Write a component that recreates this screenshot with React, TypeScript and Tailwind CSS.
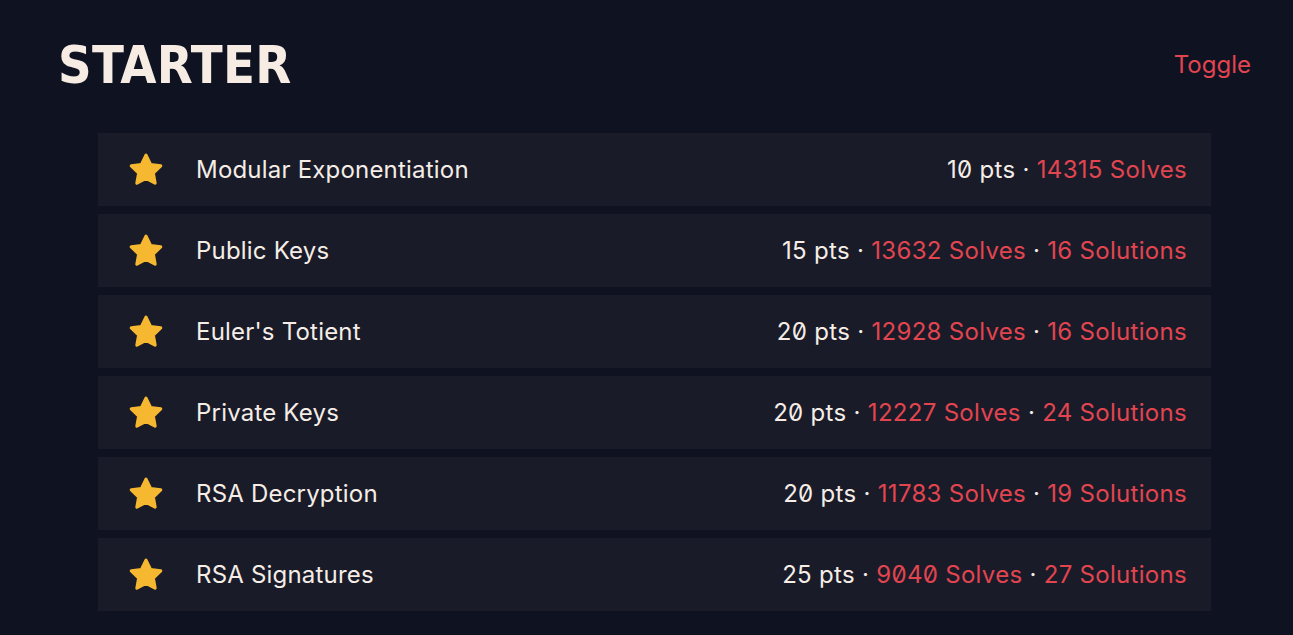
import React from "react";

const CHALLENGES = [
  { name: "Modular Exponentiation", pts: 10, solves: 14315, solutions: null },
  { name: "Public Keys", pts: 15, solves: 13632, solutions: 16 },
  { name: "Euler's Totient", pts: 20, solves: 12928, solutions: 16 },
  { name: "Private Keys", pts: 20, solves: 12227, solutions: 24 },
  { name: "RSA Decryption", pts: 20, solves: 11783, solutions: 19 },
  { name: "RSA Signatures", pts: 25, solves: 9040, solutions: 27 },
];

function Star() {
  return (
    <svg viewBox="0 0 24 24" className="w-[38px] h-[38px]" aria-hidden>
      <path
        d="M12 2.6l2.85 5.9 6.45.9-4.7 4.5 1.15 6.4L12 17.2l-5.75 3.1 1.15-6.4-4.7-4.5 6.45-.9z"
        fill="#f6b830"
        stroke="#f6b830"
        strokeWidth="2"
        strokeLinejoin="round"
      />
    </svg>
  );
}

export default function App() {
  return (
    <div className="min-h-[635px] bg-[#0f1221] font-['Inter',sans-serif] [font-feature-settings:'zero'] pt-[31px] px-[42px] pl-[58px]">
      <div className="flex items-center justify-between h-[68px]">
        <h1 className="font-['DejaVu_Sans_Condensed','DejaVu_Sans',sans-serif] font-bold text-[52px] text-[#f7ece3] tracking-[0.3px] leading-none">
          STARTER
        </h1>
        <button className="text-[#e2454f] text-[24px] leading-none">Toggle</button>
      </div>

      {/* Challenge list */}
      <ul className="mx-[40px] mt-[34px] flex flex-col gap-[8px]">
        {CHALLENGES.map((c) => (
          <li
            key={c.name}
            className="h-[73px] bg-[#191b29] flex items-center pl-[29px] pr-[24px] text-[24px]"
          >
            <Star />
            <span className="ml-[31px] text-[#f5ede6] tracking-[0.2px]">{c.name}</span>
            <span className="ml-auto tracking-[0.3px]">
              <span className="text-[#f5ede6]">{c.pts} pts</span>
              <span className="text-[#f5ede6]"> · </span>
              <span className="text-[#e2454f]">{c.solves} Solves</span>
              {c.solutions !== null && (
                <>
                  <span className="text-[#f5ede6]"> · </span>
                  <span className="text-[#e2454f]">{c.solutions} Solutions</span>
                </>
              )}
            </span>
          </li>
        ))}
      </ul>
    </div>
  );
}
